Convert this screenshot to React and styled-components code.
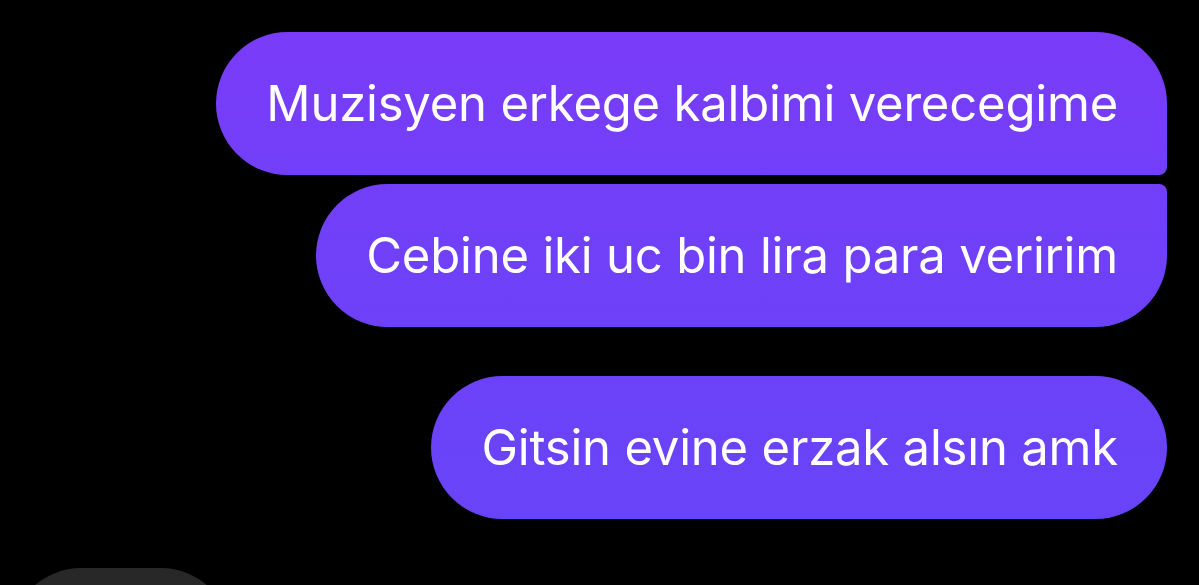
import styled, { createGlobalStyle } from "styled-components"

const GlobalStyle = createGlobalStyle`
  html, body {
    margin: 0;
    padding: 0;
    background: #000;
  }
  body {
    font-family: Inter, "Noto Sans", "Liberation Sans", sans-serif;
  }
`

const Thread = styled.div`
  width: 100%;
  height: 585px;
  overflow: hidden;
  box-sizing: border-box;
  padding: 32px 32px 0 10px;
  display: flex;
  flex-direction: column;
  align-items: flex-end;
`

// one run of messages from the same sender, stacked tight
const Group = styled.div`
  display: flex;
  flex-direction: column;
  align-items: flex-end;
  gap: 9px;
  margin-bottom: 49px;
`

const Bubble = styled.div`
  box-sizing: border-box;
  height: 143px;
  padding: 0 49px 0 50px;
  display: flex;
  align-items: center;
  color: #fff;
  font-size: 49px;
  font-weight: 400;
  letter-spacing: -0.2px;
  white-space: nowrap;
  background: linear-gradient(180deg, #7b3bf8 0%, #7040f8 40%, #6645f8 100%) fixed;
  border-radius: ${p => p.$corners || "72px"};
`

// incoming bubble peeking at the bottom edge
const Incoming = styled.div`
  align-self: flex-start;
  width: 222px;
  height: 143px;
  border-radius: 72px;
  background: #282828;
  flex-shrink: 0;
`

const App = () => {
  return (
    <>
      <GlobalStyle />
      <Thread>
        <Group>
          <Bubble $corners="72px 72px 8px 72px">Muzisyen erkege kalbimi verecegime</Bubble>
          <Bubble $corners="72px 8px 72px 72px">Cebine iki uc bin lira para veririm</Bubble>
        </Group>
        <Group>
          <Bubble>Gitsin evine erzak alsın amk</Bubble>
        </Group>
        <Incoming />
      </Thread>
    </>
  )
}

export default App
